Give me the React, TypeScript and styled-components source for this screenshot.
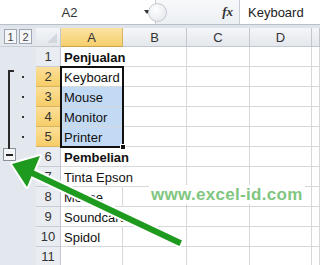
import styled, { createGlobalStyle } from 'styled-components'

const GlobalStyle = createGlobalStyle`
  html, body {
    margin: 0;
    padding: 0;
    background: #ffffff;
  }
  * {
    box-sizing: border-box;
  }
`

const Window = styled.div`
  position: relative;
  width: 320px;
  height: 265px;
  overflow: hidden;
  font-family: 'Liberation Sans', Arial, sans-serif;
  background: #ffffff;
  color: #1f1f1f;
`

const FormulaBar = styled.div`
  display: flex;
  height: 25px;
  border-bottom: 1px solid #b9c0ca;
  background: #ffffff;
`

const NameBox = styled.div`
  position: relative;
  width: 156px;
  display: flex;
  align-items: center;
  justify-content: center;
  padding-right: 16px;
  font-size: 13px;
  color: #333;
  border-right: 1px solid #c8ced6;
`

const DropArrow = styled.span`
  position: absolute;
  right: 5px;
  top: 10px;
  width: 0;
  height: 0;
  border-left: 3.5px solid transparent;
  border-right: 3.5px solid transparent;
  border-top: 4px solid #333;
`

const FxArea = styled.div`
  position: relative;
  width: 84px;
  display: flex;
  align-items: center;
  justify-content: flex-end;
  padding-right: 6px;
  background: linear-gradient(#f7f8fa, #eceff3);
  border-right: 1px solid #c8ced6;
`

const Splitter = styled.span`
  position: absolute;
  left: -8px;
  top: 3px;
  width: 19px;
  height: 19px;
  border-radius: 50%;
  border: 1px solid #c4c9d0;
  background: radial-gradient(circle at 40% 35%, #ffffff, #dfe3e8);
`

const FxLabel = styled.span`
  font-family: 'Liberation Serif', 'Times New Roman', serif;
  font-style: italic;
  font-weight: bold;
  font-size: 13px;
  color: #333;
`

const FormulaInput = styled.div`
  flex: 1;
  display: flex;
  align-items: center;
  padding-left: 8px;
  font-size: 13px;
  color: #222;
`

const Strip = styled.div`
  height: 3px;
  background: #dfe4ea;
`

const Sheet = styled.div`
  display: grid;
  grid-template-columns: 36px 25px 62px 64px 63px 62px 1fr;
  grid-template-rows: 19px repeat(11, 20px);
`

const OutlineCorner = styled.div`
  display: flex;
  gap: 2px;
  padding: 1px 0 0 4px;
  background: #e3e7ee;
  border-bottom: 1px solid #c9ced6;
`

const LevelButton = styled.div`
  width: 13px;
  height: 15px;
  display: flex;
  align-items: center;
  justify-content: center;
  font-size: 11px;
  color: #444;
  background: #f5f6f8;
  border: 1px solid #9ea6b1;
`

const Corner = styled.div`
  position: relative;
  background: linear-gradient(#f3f5f8, #e3e7ec);
  border-right: 1px solid #c2c8d0;
  border-bottom: 1px solid #c2c8d0;

  &::after {
    content: '';
    position: absolute;
    right: 3px;
    bottom: 3px;
    width: 0;
    height: 0;
    border-left: 10px solid transparent;
    border-bottom: 10px solid #d3d8df;
  }
`

const ColHeader = styled.div<{ $active?: boolean }>`
  display: flex;
  align-items: center;
  justify-content: center;
  font-size: 13px;
  color: #333;
  background: ${(p) =>
    p.$active ? 'linear-gradient(#fbe3a4, #f6cf6c)' : 'linear-gradient(#f5f6f8, #e4e7ec)'};
  border-right: 1px solid ${(p) => (p.$active ? '#d7b460' : '#c2c8d0')};
  border-bottom: 1px solid ${(p) => (p.$active ? '#c9a24a' : '#c2c8d0')};
`

const OutlineCell = styled.div`
  position: relative;
  display: flex;
  align-items: center;
  justify-content: flex-end;
  padding-right: 12px;
  background: #e3e7ee;
`

const Dot = styled.span`
  width: 2px;
  height: 2px;
  background: #333;
`

const CollapseButton = styled.div`
  position: absolute;
  left: 3px;
  top: 1px;
  width: 13px;
  height: 13px;
  display: flex;
  align-items: center;
  justify-content: center;
  background: #f4f5f7;
  border: 1px solid #8a929c;

  &::before {
    content: '';
    width: 7px;
    height: 2px;
    background: #222;
  }
`

const RowHeader = styled.div<{ $active?: boolean }>`
  display: flex;
  align-items: center;
  justify-content: center;
  font-size: 13px;
  color: #333;
  background: ${(p) => (p.$active ? 'linear-gradient(#fbdf98, #f7cd68)' : '#e9ecf0')};
  border-right: 1px solid ${(p) => (p.$active ? '#c9a24a' : '#c2c8d0')};
  border-bottom: 1px solid ${(p) => (p.$active ? '#d7b460' : '#c9ced6')};
`

const Cell = styled.div<{ $bold?: boolean; $selected?: boolean }>`
  display: flex;
  align-items: center;
  padding: 1px 0 0 3px;
  font-size: 13px;
  font-weight: ${(p) => (p.$bold ? 'bold' : 'normal')};
  white-space: nowrap;
  overflow: visible;
  color: #111;
  background: ${(p) => (p.$selected ? '#c3daf5' : 'transparent')};
  border-right: 1px solid #d6d8db;
  border-bottom: 1px solid #d6d8db;
`

const SpillCell = styled(Cell)`
  border-right-color: transparent;
`

const Bracket = styled.div`
  position: absolute;
  left: 8px;
  top: 70px;
  width: 6px;
  height: 79px;
  border-left: 2px solid #2a2a2a;
  border-top: 2px solid #2a2a2a;
`

const Selection = styled.div`
  position: absolute;
  left: 60px;
  top: 66px;
  width: 64px;
  height: 82px;
  border: 2px solid #111;
  pointer-events: none;
`

const FillHandle = styled.span`
  position: absolute;
  right: -4px;
  bottom: -4px;
  width: 6px;
  height: 6px;
  background: #111;
  border: 1px solid #fff;
`

const Watermark = styled.div`
  position: absolute;
  left: 149px;
  top: 185px;
  padding: 0 2px;
  background: #ffffff;
  font-family: 'Liberation Sans', Arial, sans-serif;
  font-weight: bold;
  font-size: 17px;
  line-height: 19px;
  letter-spacing: 0.3px;
  color: #80c680;
`

const ArrowLayer = styled.svg`
  position: absolute;
  left: 0;
  top: 0;
  pointer-events: none;
`

type Row = { n: number; text: string; bold?: boolean; selected?: boolean; active?: boolean }

const rows: Row[] = [
  { n: 1, text: 'Penjualan', bold: true },
  { n: 2, text: 'Keyboard', active: true },
  { n: 3, text: 'Mouse', selected: true, active: true },
  { n: 4, text: 'Monitor', selected: true, active: true },
  { n: 5, text: 'Printer', selected: true, active: true },
  { n: 6, text: 'Pembelian', bold: true },
  { n: 7, text: 'Tinta Epson' },
  { n: 8, text: 'Mouse' },
  { n: 9, text: 'Soundcard' },
  { n: 10, text: 'Spidol' },
  { n: 11, text: '' }
]

export default function App(): JSX.Element {
  return (
    <Window>
      <GlobalStyle />
      <FormulaBar>
        <NameBox>
          A2
          <DropArrow />
        </NameBox>
        <FxArea>
          <Splitter />
          <FxLabel>fx</FxLabel>
        </FxArea>
        <FormulaInput>Keyboard</FormulaInput>
      </FormulaBar>
      <Strip />
      <Sheet>
        <OutlineCorner>
          <LevelButton>1</LevelButton>
          <LevelButton>2</LevelButton>
        </OutlineCorner>
        <Corner />
        <ColHeader $active>A</ColHeader>
        <ColHeader>B</ColHeader>
        <ColHeader>C</ColHeader>
        <ColHeader>D</ColHeader>
        <ColHeader />
        {rows.map((r) => {
          const spills = r.text.length > 8
          const A = spills ? SpillCell : Cell
          return [
            <OutlineCell key={`o${r.n}`}>
              {r.n >= 2 && r.n <= 5 && <Dot />}
              {r.n === 6 && <CollapseButton />}
            </OutlineCell>,
            <RowHeader key={`h${r.n}`} $active={r.active}>
              {r.n}
            </RowHeader>,
            <A key={`a${r.n}`} $bold={r.bold} $selected={r.selected}>
              {r.text}
            </A>,
            <Cell key={`b${r.n}`} />,
            <Cell key={`c${r.n}`} />,
            <Cell key={`d${r.n}`} />,
            <Cell key={`e${r.n}`} />
          ]
        })}
      </Sheet>
      <Bracket />
      <Selection>
        <FillHandle />
      </Selection>
      <Watermark>www.excel-id.com</Watermark>
      <ArrowLayer width="320" height="265" viewBox="0 0 320 265">
        <g strokeLinecap="square">
          <line x1="178" y1="242" x2="30" y2="172" stroke="#ffffff" strokeWidth="10" />
          <polygon points="12,164 40,156 27,187" fill="#ffffff" stroke="#ffffff" strokeWidth="4" strokeLinejoin="round" />
          <line x1="178" y1="242" x2="30" y2="172" stroke="#1e9a1e" strokeWidth="6" />
          <polygon points="12,164 40,156 27,187" fill="#1e9a1e" />
        </g>
      </ArrowLayer>
    </Window>
  )
}
